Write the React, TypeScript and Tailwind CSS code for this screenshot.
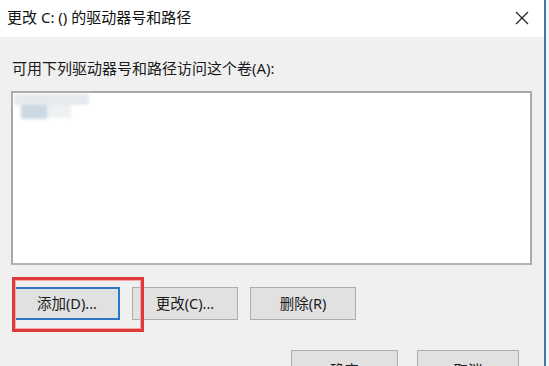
export default function App() {
  const font = "font-['Noto_Sans','Noto_Sans_CJK_SC',sans-serif]";
  const base =
    "flex justify-center h-[33px] bg-[#e1e1e1] text-[14.5px] text-[#1b1b1b] leading-none";
  const btn = `${base} items-center w-[106px] border border-[#adadad]`;

  return (
    <div className={`w-[549px] h-[366px] overflow-hidden flex ${font}`}>
      <div className="w-[544px] flex flex-col">
        {/* title bar */}
        <div className="h-[37px] bg-white flex items-center justify-between pl-[7px] pr-[15px] shrink-0">
          <span className="text-[15px] text-[#111] pb-[2px]">更改 C: () 的驱动器号和路径</span>
          <svg width="14" height="14" viewBox="0 0 14 14" className="mb-[1px]">
            <path d="M1 1 L13 13 M13 1 L1 13" stroke="#222" strokeWidth="1.2" />
          </svg>
        </div>

        {/* body */}
        <div className="flex-1 bg-[#f0f0f0] relative">
          <div className="pl-[12px] pt-[21px] h-[41px] text-[15px] text-[#1b1b1b] leading-[20px]">
            可用下列驱动器号和路径访问这个卷(A):
          </div>

          <div className="ml-[11px] mt-[13px] w-[521px] h-[174px] bg-white border-2 border-[#a9a9a9] border-b-[#b4b4b4] pt-px pl-px">
            <div className="blur-[1.5px]">
              <div className="w-[75px] h-[11px] bg-[#e6eaee]" />
              <div className="flex">
                <div className="ml-[7px] w-[26px] h-[14px] bg-[#cbd9e4]" />
                <div className="w-[24px] h-[13px] bg-[#eef0f2]" />
              </div>
            </div>
          </div>

          <div className="flex ml-[14px] mt-[22px] gap-[12px]">
            <div className={`${base} items-center w-[106px] border-2 border-[#2a78c4]`}>添加(D)...</div>
            <div className={btn}>更改(C)...</div>
            <div className={btn}>删除(R)</div>
          </div>

          <div className="flex ml-[291px] mt-[30px] gap-[19px]">
            <div className={`${base} items-start pt-[12px] w-[107px] border border-[#adadad]`}>确定</div>
            <div className={`${base} items-start pt-[12px] w-[102px] border border-[#adadad]`}>取消</div>
          </div>

          {/* red highlight annotation */}
          <div className="absolute left-[12px] top-[240px] w-[132px] h-[55px] border-[3px] border-[#e0393b] pointer-events-none">
            <div className="w-full h-full border border-[#f3a7a7]" />
          </div>
        </div>
      </div>
      <div className="w-[2px] bg-[#3f7aa6]" />
      <div className="flex-1 bg-[#f4f6f8]" />
    </div>
  );
}
